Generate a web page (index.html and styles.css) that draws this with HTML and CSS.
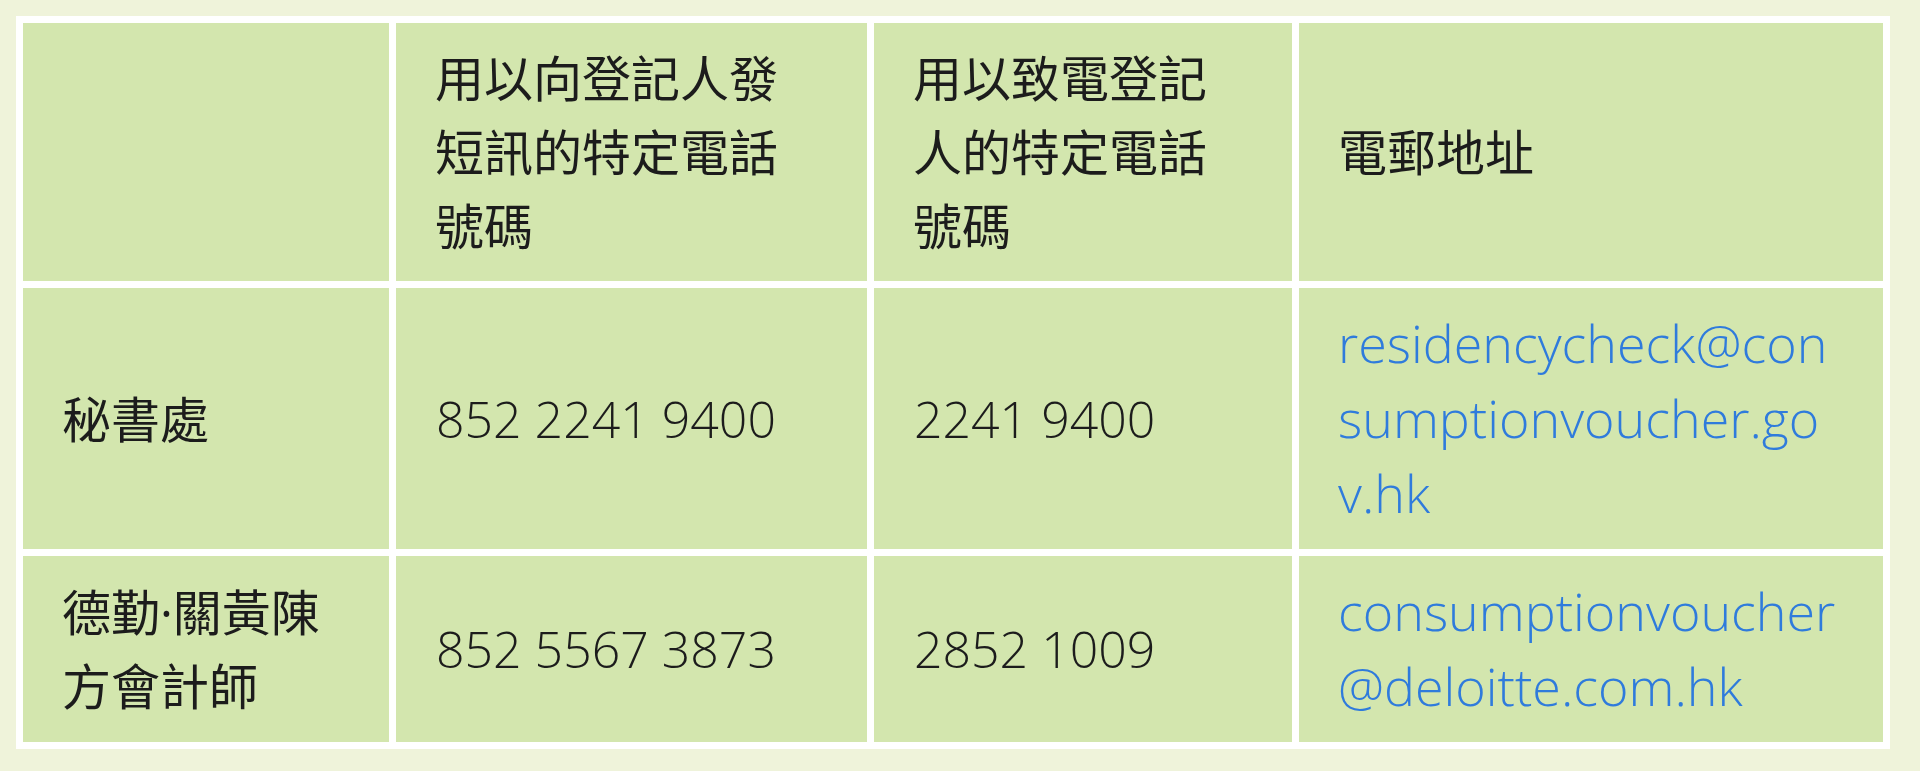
FILE: index.html
```html
<!DOCTYPE html>
<html lang="zh-Hant">
<head>
<meta charset="utf-8">
<title>聯絡資料</title>
<link rel="stylesheet" href="styles.css">
</head>
<body>
<table class="contact-table">
  <colgroup>
    <col class="col-org">
    <col class="col-sms">
    <col class="col-call">
    <col class="col-mail">
  </colgroup>
  <tr class="row-head">
    <td class="cell"></td>
    <td class="cell">用以向登記人發短訊的特定電話號碼</td>
    <td class="cell">用以致電登記人的特定電話號碼</td>
    <td class="cell">電郵地址</td>
  </tr>
  <tr class="row-body">
    <td class="cell">秘書處</td>
    <td class="cell num">852 2241 9400</td>
    <td class="cell num">2241 9400</td>
    <td class="cell mail"><a class="mail-link" href="#">residencycheck@consumptionvoucher.gov.hk</a></td>
  </tr>
  <tr class="row-body">
    <td class="cell">德勤·關黃陳方會計師</td>
    <td class="cell num">852 5567 3873</td>
    <td class="cell num">2852 1009</td>
    <td class="cell mail"><a class="mail-link" href="#">consumptionvoucher@deloitte.com.hk</a></td>
  </tr>
</table>
</body>
</html>
```

FILE: styles.css
```css
html, body {
  margin: 0;
  padding: 0;
  background: #eff3da;
}

body {
  padding: 16px 0 0 16px;
  font-family: "Open Sans", "Noto Sans CJK TC", sans-serif;
  color: #1c1c1c;
}

.contact-table {
  border-collapse: separate;
  border-spacing: 7px;
  background: #ffffff;
  table-layout: fixed;
  width: 1873px;
}

.col-org { width: 366px; }
.col-sms { width: 471px; }
.col-call { width: 418px; }
.col-mail { width: 584px; }

.cell {
  background: #d3e6ae;
  font-size: 49px;
  line-height: 74px;
  padding: 18px 57px 18px 39px;
  vertical-align: middle;
  text-align: left;
}

.num {
  font-weight: 300;
  font-size: 50px;
  padding-left: 40px;
}

.mail {
  padding-left: 39px;
  padding-right: 45px;
  word-break: break-all;
}

.mail-link {
  font-weight: 300;
  font-size: 52px;
  color: #2f7bdc;
  text-decoration: none;
}
```
